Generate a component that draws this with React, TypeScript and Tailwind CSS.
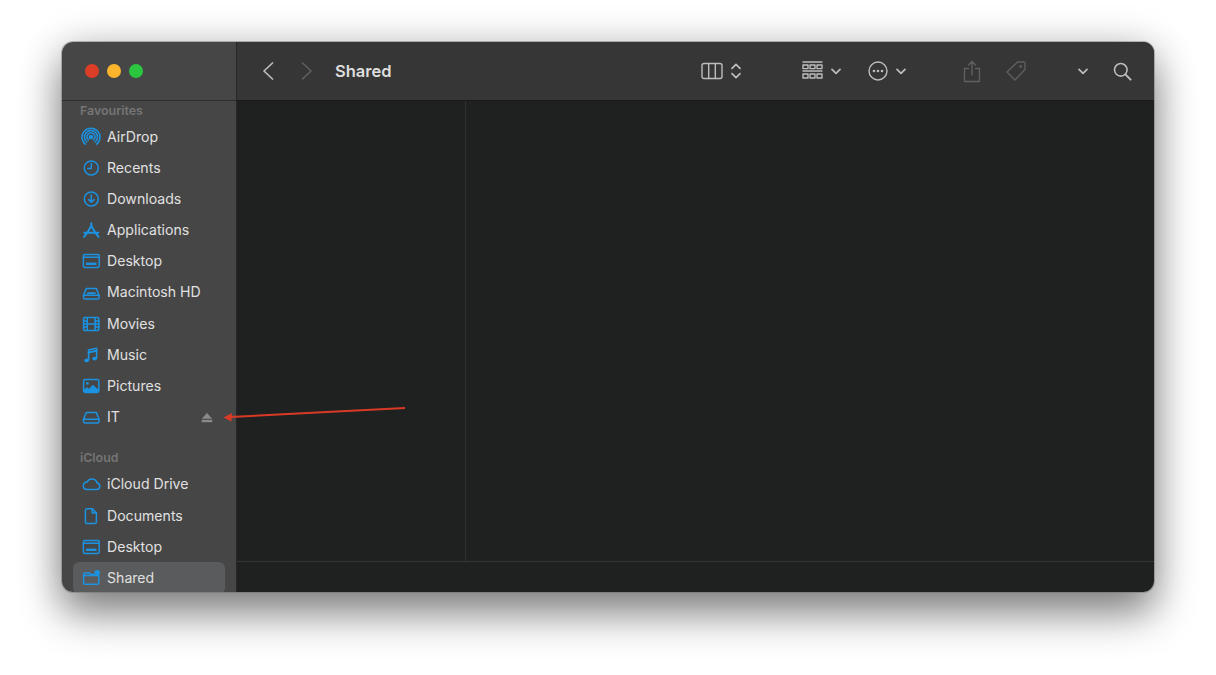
import type { ReactNode } from "react";

const blue = "#1b93e2";

function Ico({ children, w = 20, h = 20 }: { children: ReactNode; w?: number; h?: number }) {
  return (
    <svg width={w} height={h} viewBox="0 0 20 20" fill="none" stroke={blue} strokeWidth="1.5" strokeLinecap="round" strokeLinejoin="round">
      {children}
    </svg>
  );
}

const icons: Record<string, ReactNode> = {
  airdrop: (
    <Ico>
      <path d="M4.4 17.2a9 9 0 1 1 11.2 0" />
      <path d="M5.9 15a6.5 6.5 0 1 1 8.2 0" />
      <path d="M7.4 12.9a4.1 4.1 0 1 1 5.2 0" />
      <circle cx="10" cy="10" r="1.6" fill={blue} />
    </Ico>
  ),
  recents: (
    <Ico>
      <circle cx="10.3" cy="10" r="7" />
      <path d="M10.3 5.6v4.8H6.8" />
    </Ico>
  ),
  downloads: (
    <Ico>
      <circle cx="10.3" cy="10" r="7" />
      <path d="M10.3 6v7M7.6 10.6l2.7 2.7 2.7-2.7" />
    </Ico>
  ),
  applications: (
    <Ico>
      <path d="M10.3 3.2v2.6M10.3 5.8 6.4 12.6M10.3 5.8l3.9 6.8M3.4 12.8h13.8M3 16.8l3.4-4.2M17.6 16.8l-3.4-4.2" strokeWidth="2" />
    </Ico>
  ),
  desktop: (
    <Ico>
      <rect x="2.4" y="3.4" width="15.8" height="13" rx="1.4" />
      <path d="M3 6.2h14.5" />
      <rect x="5" y="11.6" width="10.5" height="2.4" fill={blue} stroke="none" />
    </Ico>
  ),
  hd: (
    <Ico>
      <path d="M2.5 12.3 5.2 5.6h10.2l2.6 6.7v2.2a1.4 1.4 0 0 1-1.4 1.4H3.9a1.4 1.4 0 0 1-1.4-1.4z" />
      <path d="M2.6 12.3h15.3" />
      <path d="M6.8 10.2h7" strokeWidth="1.8" />
    </Ico>
  ),
  movies: (
    <Ico>
      <rect x="2.6" y="3.6" width="15.2" height="12.8" rx="1.2" />
      <path d="M6.2 3.8v12.4M14.2 3.8v12.4M6.2 10h8" />
      <path d="M2.6 7h3.6M2.6 10h3.6M2.6 13h3.6M14.2 7h3.6M14.2 10h3.6M14.2 13h3.6" strokeWidth="1.7" />
    </Ico>
  ),
  music: (
    <Ico>
      <path d="M7.6 15V5l8-1.8v10" strokeWidth="1.6" />
      <path d="M7.6 7.5l8-1.8" strokeWidth="2" />
      <ellipse cx="5.6" cy="15.4" rx="2.3" ry="1.9" fill={blue} stroke="none" />
      <ellipse cx="13.6" cy="13.6" rx="2.3" ry="1.9" fill={blue} stroke="none" />
    </Ico>
  ),
  pictures: (
    <Ico>
      <rect x="2.6" y="3.6" width="15.2" height="12.8" rx="1.4" />
      <circle cx="6.4" cy="7.4" r="1.4" fill={blue} stroke="none" />
      <path d="M3 16v-2.4l3-2.4 2.2 1.6 3.6-4 5.8 5V16z" fill={blue} stroke="none" />
    </Ico>
  ),
  it: (
    <Ico>
      <path d="M2.5 12.3 5.2 5.6h10.2l2.6 6.7v2.2a1.4 1.4 0 0 1-1.4 1.4H3.9a1.4 1.4 0 0 1-1.4-1.4z" />
      <path d="M2.6 12.3h15.3" />
    </Ico>
  ),
  cloud: (
    <Ico>
      <path d="M5.3 15.6h10.4a3.3 3.3 0 0 0 .5-6.5 5.4 5.4 0 0 0-10.2-1A3.8 3.8 0 0 0 5.3 15.6z" />
    </Ico>
  ),
  documents: (
    <Ico>
      <path d="M6 2.8h5.4l4 4.1v9a1.6 1.6 0 0 1-1.6 1.6H6a1.6 1.6 0 0 1-1.6-1.6V4.4A1.6 1.6 0 0 1 6 2.8z" />
      <path d="M11.2 3v4h4" />
    </Ico>
  ),
  shared: (
    <Ico>
      <path d="M2.6 6.4V15a1.3 1.3 0 0 0 1.3 1.3h12.6a1.3 1.3 0 0 0 1.3-1.3V7.6H2.6" />
      <path d="M2.6 6.4a1.3 1.3 0 0 1 1.3-1.3h4.4l1.4 1.3h3" />
      <circle cx="16.2" cy="4.8" r="2.8" fill={blue} stroke="none" />
    </Ico>
  ),
};

const favourites = [
  ["airdrop", "AirDrop"],
  ["recents", "Recents"],
  ["downloads", "Downloads"],
  ["applications", "Applications"],
  ["desktop", "Desktop"],
  ["hd", "Macintosh HD"],
  ["movies", "Movies"],
  ["music", "Music"],
  ["pictures", "Pictures"],
  ["it", "IT"],
];

const icloud = [
  ["cloud", "iCloud Drive"],
  ["documents", "Documents"],
  ["desktop", "Desktop"],
  ["shared", "Shared"],
];

function SideRow({ icon, label, active }: { icon: string; label: string; active?: boolean }) {
  return (
    <div className={`flex h-[31.2px] shrink-0 items-center rounded-md pl-[8px] pr-[12px] ${active ? "bg-[#5a5b5c]" : ""}`}>
      <span className="flex w-[26px] shrink-0">{icons[icon]}</span>
      <span className="text-[14.1px] leading-none text-[#e0e0e0]">{label}</span>
      {label === "IT" && (
        <svg className="ml-auto" width="12" height="11" viewBox="0 0 13 11" fill="#8a8a8a">
          <path d="M6.5 0.5 12.2 6.8H0.8z" />
          <rect x="0.8" y="8" width="11.4" height="2.6" />
        </svg>
      )}
    </div>
  );
}

function ToolIcon({ children, w, h, dim }: { children: ReactNode; w: number; h: number; dim?: boolean }) {
  return (
    <svg width={w} height={h} viewBox={`0 0 ${w} ${h}`} fill="none" stroke={dim ? "#5f5f5f" : "#bdbdbd"} strokeWidth="1.4" strokeLinecap="round" strokeLinejoin="round">
      {children}
    </svg>
  );
}

const Chevron = () => (
  <ToolIcon w={10} h={7}>
    <path d="M1 1.4 5 5.4l4-4" strokeWidth="1.7" />
  </ToolIcon>
);

export default function App() {
  return (
    <div className="relative h-[675px] w-[1216px] overflow-hidden bg-white pl-[62px] pt-[42px]" style={{ fontFamily: "Inter, sans-serif" }}>
      <div className="flex h-[550px] w-[1092px] overflow-hidden rounded-[11px] shadow-[0_0_0_1px_rgba(110,110,110,0.45),0_22px_42px_rgba(0,0,0,0.46),0_0_40px_rgba(0,0,0,0.16)]">
        {/* Sidebar */}
        <aside className="flex w-[175px] shrink-0 flex-col overflow-hidden border-r border-[#262626] bg-[#464646] pl-[11px] pr-[11px]">
          <div className="-mx-[11px] flex h-[59px] shrink-0 items-center gap-[8px] border-b border-[#2e2e2e] pl-[23px]">
            <span className="h-[14px] w-[14px] rounded-full bg-[#dc3d26]" />
            <span className="h-[14px] w-[14px] rounded-full bg-[#fdb52e]" />
            <span className="h-[14px] w-[14px] rounded-full bg-[#2bc63f]" />
          </div>
          <div className="flex h-[20px] shrink-0 items-center pl-[7px] text-[12.4px] font-semibold text-[#757575]">Favourites</div>
          {favourites.map(([icon, label]) => (
            <SideRow key={label} icon={icon} label={label} />
          ))}
          <div className="flex h-[36px] shrink-0 items-end pb-[1px] pl-[7px] text-[12.4px] font-semibold text-[#757575]">iCloud</div>
          {icloud.map(([icon, label]) => (
            <SideRow key={label} icon={icon} label={label} active={label === "Shared"} />
          ))}
        </aside>

        <div className="flex min-w-0 flex-1 flex-col bg-[#1f2020]">
          {/* Toolbar */}
          <header className="flex h-[59px] shrink-0 items-center border-b border-[#1a1a1a] bg-[#363636]">
            <div className="ml-[25px] flex w-[73px] items-center gap-[27px]">
              <ToolIcon w={12} h={20}>
                <path d="M10.5 2 2 10l8.5 8" strokeWidth="1.7" />
              </ToolIcon>
              <ToolIcon w={12} h={20} dim>
                <path d="M1.5 2 10 10l-8.5 8" strokeWidth="1.7" />
              </ToolIcon>
            </div>
            <h1 className="text-[16.5px] font-semibold text-[#dedede]">Shared</h1>

            <div className="ml-[309px] flex items-center gap-[8px]">
              <ToolIcon w={22} h={18}>
                <rect x="1" y="1.5" width="20" height="15" rx="2" />
                <path d="M7.7 1.5v15M14.3 1.5v15" />
              </ToolIcon>
              <ToolIcon w={10} h={18}>
                <path d="M1 6.4 5 2.4l4 4M1 11.6l4 4 4-4" strokeWidth="1.7" />
              </ToolIcon>
            </div>

            <div className="ml-[61px] flex items-center gap-[8px]">
              <ToolIcon w={21} h={20}>
                <path d="M1 1h19M1 10h19" />
                <rect x="1" y="4" width="5" height="3.6" />
                <rect x="8" y="4" width="5" height="3.6" />
                <rect x="15" y="4" width="5" height="3.6" />
                <rect x="1" y="13" width="5" height="4" />
                <rect x="8" y="13" width="5" height="4" />
                <rect x="15" y="13" width="5" height="4" />
              </ToolIcon>
              <Chevron />
            </div>

            <div className="ml-[27px] flex items-center gap-[8px]">
              <ToolIcon w={20} h={20}>
                <circle cx="10" cy="10" r="9" />
                <circle cx="6" cy="10" r="0.6" fill="#bdbdbd" />
                <circle cx="10" cy="10" r="0.6" fill="#bdbdbd" />
                <circle cx="14" cy="10" r="0.6" fill="#bdbdbd" />
              </ToolIcon>
              <Chevron />
            </div>

            <div className="ml-[57px]">
              <ToolIcon w={18} h={23} dim>
                <path d="M5.5 8.5H1.5v13h15v-13h-4M9 15V1.5M5.5 5 9 1.5 12.5 5" />
              </ToolIcon>
            </div>

            <div className="ml-[24px]">
              <ToolIcon w={22} h={22} dim>
                <path d="M12.5 2h6a1.5 1.5 0 0 1 1.5 1.5v6L10 20 2 12z" />
                <circle cx="15.6" cy="6.4" r="0.7" />
              </ToolIcon>
            </div>

            <div className="ml-[51px] flex">
              <Chevron />
            </div>

            <div className="ml-[25px]">
              <ToolIcon w={19} h={19}>
                <circle cx="7.8" cy="7.8" r="6.3" strokeWidth="1.6" />
                <path d="M12.4 12.4 17.6 17.6" strokeWidth="2" />
              </ToolIcon>
            </div>
          </header>

          {/* Column view */}
          <div className="flex min-h-0 flex-1">
            <div className="w-[229px] shrink-0 border-r border-[#303030]" />
            <div className="flex-1" />
          </div>
          <div className="h-[31px] shrink-0 border-t border-[#343535]" />
        </div>
      </div>

      {/* red annotation arrow */}
      <svg className="absolute left-[220px] top-[402px]" width="190" height="20" viewBox="0 0 190 20" fill="none">
        <path d="M185 6 10 15" stroke="#d93a26" strokeWidth="2" />
        <path d="M3.5 15.5 12 11l-0.5 8.5z" fill="#d93a26" />
      </svg>
    </div>
  );
}
